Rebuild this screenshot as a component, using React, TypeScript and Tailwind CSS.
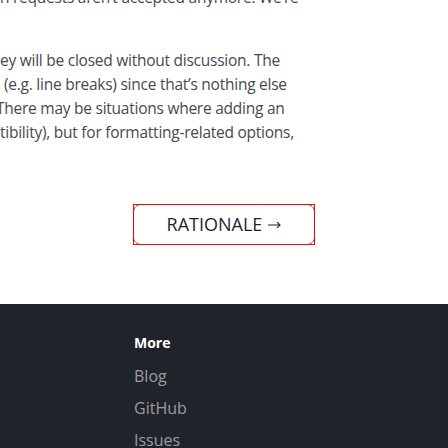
import React from 'react';

const bodyLines: { text: string; offset: string }[] = [
  { text: 'ey will be closed without discussion. The', offset: 'ml-0' },
  { text: '(e.g. line breaks) since that\u2019s nothing else', offset: 'ml-[4px]' },
  { text: 'There may be situations where adding an', offset: 'ml-[-4px]' },
  { text: 'tibility), but for formatting-related options,', offset: 'ml-0' },
];

const footerLinks = ['Blog', 'GitHub', 'Issues'];

const App: React.FC = () => {
  return (
    <div className="w-[448px] h-[448px] overflow-hidden bg-white flex flex-col font-['Segoe_UI','Open_Sans',sans-serif]">
      {/* Article text, scrolled off to the left */}
      <div className="text-[15.5px] leading-[24px] text-[#47494e] whitespace-nowrap tracking-[-0.25px]">
        <p className="mt-[-15px]">n requests aren&rsquo;t accepted anymore. We&rsquo;re</p>
        <div className="mt-[39px]">
          {bodyLines.map((line) => (
            <p key={line.text} className={line.offset}>
              {line.text}
            </p>
          ))}
        </div>
      </div>

      {/* Rationale button */}
      <div className="mt-[60px] flex justify-center">
        <a className="relative w-[182px] h-[41px] flex items-center justify-center gap-[6px] rounded-lg border border-[#6b6f76] text-[18px] text-[#1c2536]">
          <span>RATIONALE</span>
          <svg width="13" height="8" viewBox="0 0 13 8" className="mt-[1px]" fill="none" stroke="#1c2536" strokeWidth="1.1">
            <path d="M0 4h12M9 1.2l3 2.8-3 2.8" />
          </svg>
          <span className="absolute inset-[-1px] border border-[#ff0000] pointer-events-none" />
        </a>
      </div>

      {/* Footer */}
      <footer className="mt-[59px] flex-1 bg-[#21232b] pl-[134px] pt-[29px]">
        <div className="text-[14px] leading-[20px] font-bold text-white">More</div>
        <ul className="mt-[11px] flex flex-col gap-[8px]">
          {footerLinks.map((link) => (
            <li key={link} className="text-[16px] leading-[24px] text-[#9b9ca3]">
              {link}
            </li>
          ))}
        </ul>
      </footer>
    </div>
  );
};

export default App;
